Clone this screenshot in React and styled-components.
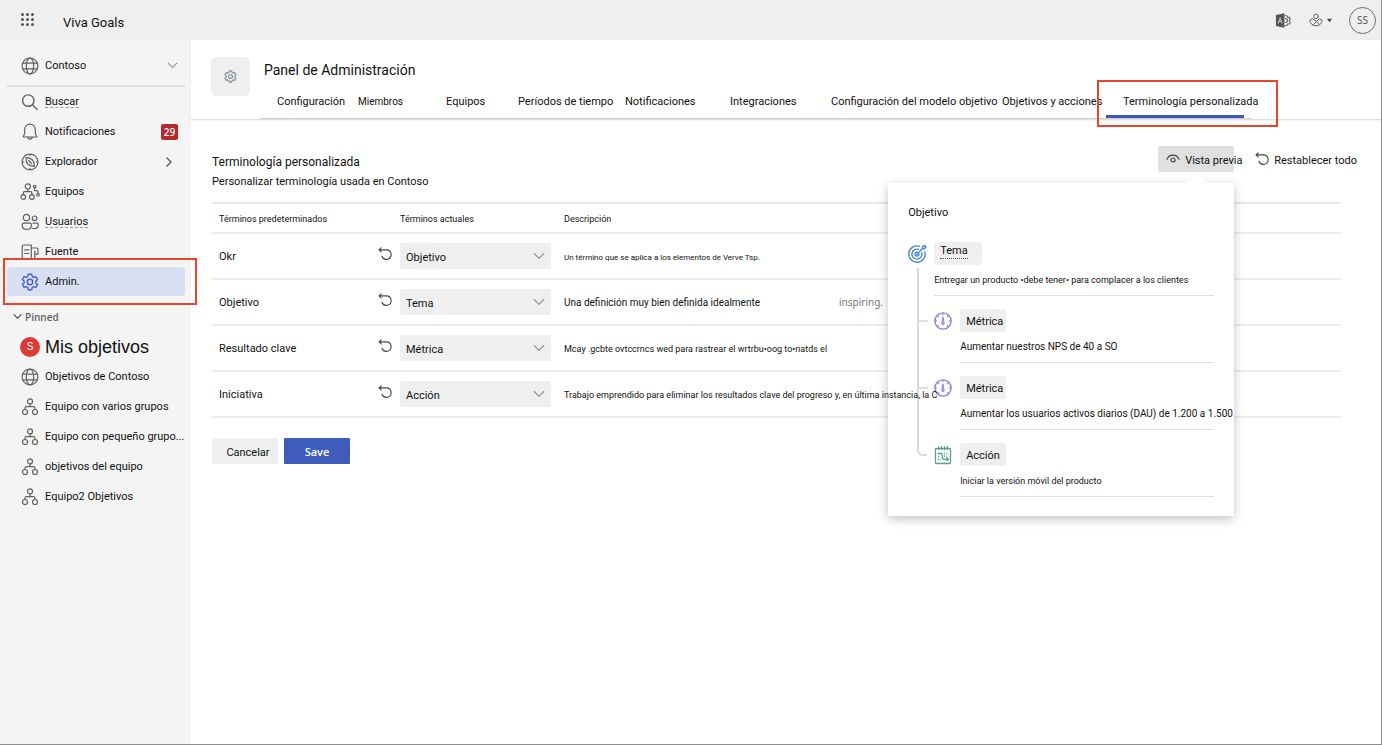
import React from "react";
import styled, { createGlobalStyle, css } from "styled-components";

const Global = createGlobalStyle`
  *, *::before, *::after { box-sizing: border-box; }
  body { margin: 0; background: #fff; }
  body, button, select { font-family: Roboto, "Liberation Sans", sans-serif; color: #111; }
  a { color: inherit; text-decoration: none; }
  ul { list-style: none; margin: 0; padding: 0; }
  h1, h2, h3, p { margin: 0; font-weight: 400; }
  svg { display: block; flex: none; }
`;

/* ---------- icons ---------- */
const Icon = styled.svg.attrs((p) => ({
  viewBox: p.viewBox || "0 0 18 18",
  "aria-hidden": true,
}))`
  width: ${(p) => p.$size || 18}px;
  height: ${(p) => p.$size || 18}px;
  fill: none;
  stroke: ${(p) => p.$color || "#616161"};
  stroke-width: ${(p) => p.$weight || 1.2};
  stroke-linecap: round;
  stroke-linejoin: round;
  overflow: visible;
`;

const GearPaths = () => (
  <>
    <circle cx="9" cy="9" r="2.7" />
    <path d="M7.3 1.2h3.4l.5 2.2 1.5.9 2.2-.7 1.7 2.9-1.7 1.6v1.8l1.7 1.6-1.7 2.9-2.2-.7-1.5.9-.5 2.2H7.3l-.5-2.2-1.5-.9-2.2.7-1.7-2.9 1.7-1.6V8.100L1.400 6.500l1.700-2.900 2.200.7 1.500-.9z" />
  </>
);
const GlobeIcon = () => (
  <Icon>
    <circle cx="9" cy="9" r="7.900" />
    <ellipse cx="9" cy="9" rx="3.700" ry="7.900" />
    <path d="M1.700 6.200h14.600M1.700 11.800h14.600" />
  </Icon>
);
const SearchIcon = () => (
  <Icon $weight={1.4}>
    <circle cx="7.300" cy="7.600" r="5.700" />
    <path d="M11.500 11.800l4.700 4.700" />
  </Icon>
);
const BellIcon = () => (
  <Icon>
    <path d="M9 1.100a5.300 5.300 0 0 0-5.300 5.300v4.200l-1.600 3.400h13.800l-1.600-3.400V6.400A5.300 5.300 0 0 0 9 1.100z" />
    <path d="M6.900 14.100a2.100 2.100 0 0 0 4.200 0" />
  </Icon>
);
const CompassIcon = () => (
  <Icon>
    <circle cx="9" cy="9" r="7.900" />
    <path d="M5 4.600c3 .2 5.300 1 6.700 2.600 1.200 1.500 1.600 3.400 1.500 6.200-3-.1-5-.9-6.500-2.400C5.300 9.500 4.900 7.500 5 4.600zM7.600 7.500l3 3.200M9 1.500v1.200M9 15.300v1.200M1.500 9h1.200M15.300 9h1.200" />
  </Icon>
);
const TeamsIcon = () => (
  <Icon>
    <circle cx="6.800" cy="3.400" r="2.600" />
    <circle cx="2.300" cy="14" r="2.300" />
    <circle cx="10.900" cy="14" r="2.300" />
    <circle cx="13.600" cy="3.600" r="1.300" />
    <circle cx="17" cy="11.700" r="1.300" />
    <path d="M6.800 6v2.700M2.300 11.700V10c0-.8.500-1.300 1.300-1.300h6c.8 0 1.300.5 1.300 1.300v1.700M13.600 5v2.600h2.200c.7 0 1.200.5 1.200 1.200v1.600" />
  </Icon>
);
const UsersIcon = () => (
  <Icon>
    <circle cx="5.400" cy="4.600" r="3.200" />
    <circle cx="13.600" cy="5.300" r="2.300" />
    <path d="M2.700 10.200h6.200c.9 0 1.500.6 1.500 1.500v.7c0 2.500-1.800 4-4.600 4s-4.600-1.500-4.600-4v-.7c0-.9.600-1.500 1.500-1.500zM12 10.200h3.800c.9 0 1.500.6 1.500 1.500 0 2.500-1.300 3.900-4 3.900-.7 0-1.300-.1-1.800-.3" />
  </Icon>
);
const FeedIcon = () => (
  <Icon>
    <path d="M2.700 2h7.600v14H2.700c-.9 0-1.500-.6-1.500-1.500v-11C1.200 2.600 1.800 2 2.700 2zM3.700 6.800h4M3.700 10.500h4M10.300 5h5.200c.9 0 1.500.6 1.500 1.500v4.600h-3.200V16h-3.500M13.800 11V8" />
  </Icon>
);
const OrgIcon = () => (
  <Icon>
    <circle cx="9" cy="3.400" r="2.500" />
    <circle cx="4" cy="14" r="2.500" />
    <circle cx="14" cy="14" r="2.500" />
    <path d="M9 5.900v2.800M4 11.500v-1.200c0-1 .6-1.600 1.600-1.600h6.800c1 0 1.600.6 1.600 1.600v1.200" />
  </Icon>
);
const ChevronDown = ({ size = 12, color = "#8f8f8f", weight = 1.1 }) => (
  <Icon viewBox="0 0 12 12" $size={size} $color={color} $weight={weight}>
    <path d="M1.200 3.500L6 8.300l4.800-4.800" />
  </Icon>
);
const ResetIcon = () => (
  <Icon viewBox="0 0 14 14" $size={14} $color="#444" $weight={1.1}>
    <path d="M3.200.9L1 2.900l2.200 2M1.200 2.900h7.300a4.700 4.700 0 1 1-4.500 6.300" />
  </Icon>
);
const EyeIcon = () => (
  <Icon viewBox="0 0 14 14" $size={14} $color="#444" $weight={1.200}>
    <path d="M1 7.300C2.200 4.700 4.300 3.200 7 3.200s4.800 1.500 6 4.100" />
    <circle cx="7" cy="8" r="2" />
  </Icon>
);
const TargetIcon = () => (
  <Icon $color="#4a86d4" $weight={1.400}>
    <path d="M11.600 1.300A8.200 8.200 0 1 0 16.800 6.600M10.500 4.400a5 5 0 1 0 3.200 3.300M9.200 7.100a2 2 0 1 0 1.800 1.900M8.900 9.200l5.400-5.500M14.300 3.700l.2-2.100L16.700.400l.2 1.200 1.100.2-1.500 1.900z" />
  </Icon>
);
const GaugeIcon = () => (
  <Icon $color="#8b7fe0" $weight={1.400}>
    <circle cx="9" cy="9" r="8.100" />
    <path d="M9 5.200l1.200 6.300a1.200 1.200 0 1 1-2.400 0z" fill="#b9b1ee" strokeWidth="0.900" />
    <path d="M9 1v1.700M3.400 3.400l1.200 1.200M14.600 3.400l-1.200 1.200M1 9h1.700M15.300 9H17M3.400 14.600l1.200-1.200M14.600 14.600l-1.200-1.200" strokeWidth="1.100" />
  </Icon>
);
const CalendarIcon = () => (
  <Icon $color="#57a08c" $weight={1.300}>
    <rect x="1.500" y="2.500" width="15" height="15" rx="1" />
    <path d="M4.700.6v3M7.500.6v3M10.500.6v3M13.300.6v3M4 7.500h3.300l1 1.300v3.300l1.200 1.200h4.800M12.800 11.700l1.700 1.600-1.700 1.600" />
    <path d="M10 7.500h4.500M10 10h3M4 10.500h2M4 13.500h3" strokeDasharray="1 1.400" strokeLinecap="butt" />
  </Icon>
);

/* ---------- shell ---------- */
const Shell = styled.div`
  min-height: 100vh;
  display: flex;
  flex-direction: column;
  border: solid #8f8f8f;
  border-width: 0 1px 1px 0;
`;
const TopBar = styled.header`
  height: 40px;
  background: #efefef;
  display: flex;
  align-items: center;
  padding: 0 5px 0 20px;
`;
const PlainButton = styled.button`
  border: 0;
  background: none;
  padding: 0;
  display: flex;
  align-items: center;
  gap: 4px;
`;
const AppsButton = styled(PlainButton)`
  height: 38px;
  align-self: flex-start;
`;
const Brand = styled.span`
  margin: 6px 0 0 28px;
  font-size: 13px;
  line-height: 16px;
`;
const TopActions = styled.div`
  margin-left: auto;
  display: flex;
  align-items: center;
  gap: 17px;
`;
const Avatar = styled.span`
  width: 27px;
  height: 27px;
  border: 1px solid #6d6d6d;
  border-radius: 50%;
  display: grid;
  place-items: center;
  font: 10px "Noto Sans", sans-serif;
  color: #555;
`;
const Body = styled.div`
  flex: 1;
  display: flex;
`;

const Callout = css`
  content: "";
  position: absolute;
  border: 2px solid #e8452c;
  pointer-events: none;
  z-index: 3;
`;

/* ---------- side navigation ---------- */
const Sidebar = styled.nav`
  width: 191px;
  flex: none;
  background: #f4f4f4;
  padding: 6px 6px 0 7px;
`;
const OrgButton = styled(PlainButton)`
  width: 178px;
  height: 41px;
  padding: 0 7px 0 14px;
  gap: 6px;
  font-size: 11px;
  border-bottom: 2px solid #dedede;
  & > svg:last-child { margin-left: auto; }
`;
const NavList = styled.ul`
  display: flex;
  flex-direction: column;
  gap: 1px;
`;
const NavLink = styled.a`
  position: relative;
  width: 178px;
  height: 29px;
  padding: 0 7px 0 14px;
  display: flex;
  align-items: center;
  gap: 6px;
  white-space: nowrap;
  font-size: 11px;
  ${(p) => p.$large && 'font-family: "Liberation Sans", sans-serif; font-size: 18px;'}
  border-radius: 4px;
  ${(p) =>
    p.$active &&
    css`
      background: #d9dff2;
      &::after {
        ${Callout}
        inset: -9px -12px -9px -4px;
      }
    `}
`;
const Label = styled.span`
  line-height: 16px;
  ${(p) => p.$dashed && "line-height: 11px; border-bottom: 1px dashed #999;"}
`;
const MoreMark = styled.span`
  margin: 0 4px 0 auto;
`;
const Badge = styled.span`
  margin-left: auto;
  width: 17px;
  height: 16px;
  border-radius: 2px;
  background: #b7272c;
  color: #fff;
  font: 500 10px/16px "Noto Sans", sans-serif;
  text-align: center;
`;
const PinnedToggle = styled(PlainButton)`
  height: 29px;
  margin-top: 6px;
  margin-bottom: 1px;
  padding-left: 6px;
  gap: 3px;
  font: 600 10px "Open Sans", sans-serif;
  color: #616161;
`;
const Initial = styled.span`
  width: 20px;
  height: 20px;
  margin: 0 -1px;
  border-radius: 50%;
  background: #dd3a35;
  color: #fff;
  font-size: 10px;
  line-height: 20px;
  text-align: center;
`;

/* ---------- main ---------- */
const Main = styled.main`
  flex: 1;
  min-width: 0;
`;
const PageHead = styled.div`
  display: flex;
  gap: 10px;
  padding: 17px 0 0 20px;
  border-bottom: 1px solid #e0e0e0;
  box-shadow: 0 1px 2px rgba(0, 0, 0, 0.06);
`;
const GearTile = styled.div`
  width: 39px;
  height: 39px;
  border-radius: 6px;
  background: #efefef;
  display: grid;
  place-items: center;
`;
const HeadText = styled.div`
  flex: 1;
  min-width: 0;
`;
const Title = styled.h1`
  padding-left: 4px;
  font-size: 14px;
  line-height: 26px;
`;
const Tabs = styled.div`
  display: grid;
  grid-template-columns: 81px 88px 72px 107px 105px 101px 171px 121px 121px;
  width: 992px;
  padding-left: 17px;
  border-bottom: 1px solid #d0d0d0;
`;
const Tab = styled.a`
  height: 35px;
  font-size: ${(p) => (p.$small ? 10 : 11)}px;
  line-height: 37px;
  white-space: nowrap;
`;
const ActiveTab = styled(Tab)`
  position: relative;
  width: 138px;
  margin-left: -17px;
  padding-left: 17px;
  border-bottom: 3px solid #3f57b8;
  &::after {
    ${Callout}
    inset: -3px -34px -12px -9px;
  }
`;
const Content = styled.section`
  padding: 26px 40px 24px 21px;
`;
const Intro = styled.div`
  display: flex;
  justify-content: space-between;
  align-items: flex-start;
  height: 56px;
`;
const Heading = styled.h2`
  margin-top: 6px;
  font-size: 12px;
  line-height: 20px;
`;
const Sub = styled.p`
  font-size: 11px;
  line-height: 20px;
`;
const Tools = styled.div`
  display: flex;
  gap: 21px;
  margin-right: -16px;
`;
const PreviewWrap = styled.div`
  position: relative;
`;
const ToolButton = styled(PlainButton)`
  height: 26px;
  gap: 5px;
  font-size: 11px;
  white-space: nowrap;
  & > span { padding-top: 3px; }
`;
const PreviewButton = styled(ToolButton)`
  width: 76px;
  padding-left: 8px;
  border-radius: 2px;
  background: #e0e0e0;
`;

const Table = styled.table`
  width: 100%;
  table-layout: fixed;
  border-collapse: collapse;
  border-top: 2px solid #e8e8e8;
  th, td {
    padding: 0;
    text-align: left;
    font-weight: 400;
    border-bottom: 2px solid #ececec;
    white-space: nowrap;
  }
  th { height: 30px; padding-top: 2px; font-size: 9px; }
  td { height: 46px; font-size: 11px; }
  th:first-child, td:first-child { padding-left: 7px; }
`;
const RowReset = styled(PlainButton)`
  padding-bottom: 4px;
`;
const SelectBox = styled.div`
  position: relative;
  width: 151px;
  svg { position: absolute; right: 6px; top: 7px; pointer-events: none; }
`;
const Select = styled.select`
  appearance: none;
  width: 100%;
  height: 26px;
  padding: 2px 6px 0;
  border: 0;
  border-radius: 2px;
  background: #efefef;
  font-size: 11px;
  display: block;
`;
const Desc = styled.span`
  position: relative;
  z-index: 2;
  font-size: ${(p) => p.$size || 9}px;
`;
const Faded = styled.span`
  margin-left: 79px;
  font: 10px "Noto Sans", sans-serif;
  color: #777;
`;
const Actions = styled.div`
  display: flex;
  gap: 6px;
  margin-top: 20px;
`;
const Action = styled.button`
  width: 66px;
  height: 26px;
  padding: ${(p) => (p.$primary ? "0" : "3px 0 0 6px")};
  border: 0;
  border-radius: 1px;
  background: ${(p) => (p.$primary ? "#3f5bbb" : "#efefef")};
  color: ${(p) => (p.$primary ? "#fff" : "#111")};
  font: ${(p) => (p.$primary ? '600 11px "Open Sans"' : "11px Roboto")}, sans-serif;
`;

/* ---------- preview popover ---------- */
const Popover = styled.aside`
  position: absolute;
  z-index: 1;
  top: 37px;
  right: 0;
  width: 346px;
  padding: 20px 20px 19px;
  background: #fff;
  box-shadow: 0 3px 10px rgba(0, 0, 0, 0.24);
  &::before {
    content: "";
    position: absolute;
    top: -7px;
    right: 30px;
    width: 14px;
    height: 14px;
    background: #fff;
    transform: rotate(45deg);
  }
`;
const PopTitle = styled.h3`
  margin-bottom: 19px;
  font-size: 11px;
  line-height: 20px;
`;
const Node = styled.div`
  display: grid;
  grid-template-columns: 18px 1fr;
  gap: 8px;
  margin-bottom: 13px;
  & > svg { margin-top: 3px; }
`;
const NodeBody = styled.div`
  min-width: 0;
  padding-bottom: 7px;
  border-bottom: 1px solid #dedede;
`;
const Tag = styled.span`
  display: block;
  width: ${(p) => (p.$root ? 48 : 46)}px;
  height: 23px;
  padding-left: 6px;
  border-radius: 3px;
  background: #efefef;
  font-size: 11px;
  line-height: ${(p) => (p.$root ? 18 : 25)}px;
  & > span { ${(p) => p.$root && "display: inline-block; height: 17px; border-bottom: 1px dotted #555;"} }
`;
const Caption = styled.p`
  margin-top: 7px;
  font-size: ${(p) => (p.$small ? 9 : 10)}px;
  line-height: 16px;
  white-space: nowrap;
`;
const Children = styled.ul`
  position: relative;
  padding-left: 26px;
  &::before {
    content: "";
    position: absolute;
    left: 9px;
    top: -41px;
    bottom: 41px;
    width: 10px;
    border: solid #d9d9d9;
    border-width: 0 0 2px 2px;
    border-bottom-left-radius: 6px;
  }
  li { position: relative; }
  li:not(:last-child)::before {
    content: "";
    position: absolute;
    left: -16px;
    top: 11px;
    width: 10px;
    border-top: 2px solid #dedede;
  }
  li:last-child ${Node} { margin-bottom: 0; }
`;

/* ---------- data ---------- */
const NAV = [
  { label: "Buscar", Glyph: SearchIcon, dashed: true },
  { label: "Notificaciones", Glyph: BellIcon, badge: "29" },
  { label: "Explorador", Glyph: CompassIcon, more: true },
  { label: "Equipos", Glyph: TeamsIcon },
  { label: "Usuarios", Glyph: UsersIcon, dashed: true },
  { label: "Fuente", Glyph: FeedIcon },
];
const PINNED = [
  { label: "Objetivos de Contoso", Glyph: GlobeIcon },
  { label: "Equipo con varios grupos", Glyph: OrgIcon },
  { label: "Equipo con pequeño grupo...", Glyph: OrgIcon },
  { label: "objetivos del equipo", Glyph: OrgIcon },
  { label: "Equipo2 Objetivos", Glyph: OrgIcon },
];
const TABS = [
  { label: "Configuración" },
  { label: "Miembros", small: true },
  { label: "Equipos" },
  { label: "Períodos de tiempo" },
  { label: "Notificaciones" },
  { label: "Integraciones" },
  { label: "Configuración del modelo objetivo" },
  { label: "Objetivos y acciones" },
];
const ROWS = [
  { term: "Okr", value: "Objetivo", desc: "Un término que se aplica a los elementos de Verve Tsp.", size: 8 },
  { term: "Objetivo", value: "Tema", desc: "Una definición muy bien definida idealmente", extra: "inspiring.", size: 10 },
  { term: "Resultado clave", value: "Métrica", desc: "Mcay .gcbte ovtccrncs wed para rastrear el wrtrbu•oog to•natds el" },
  { term: "Iniciativa", value: "Acción", desc: "Trabajo emprendido para eliminar los resultados clave del progreso y, en última instancia, la C" },
];
const NODES = [
  { tag: "Métrica", text: "Aumentar nuestros NPS de 40 a SO", Glyph: GaugeIcon },
  { tag: "Métrica", text: "Aumentar los usuarios activos diarios (DAU) de 1.200 a 1.500", Glyph: GaugeIcon },
  { tag: "Acción", text: "Iniciar la versión móvil del producto", Glyph: CalendarIcon, small: true },
];

function SideNav() {
  return (
    <Sidebar aria-label="Viva Goals">
      <OrgButton>
        <GlobeIcon />
        <Label>Contoso</Label>
        <ChevronDown size={11} />
      </OrgButton>
      <NavList>
        {NAV.map(({ label, Glyph, badge, more, dashed }) => (
          <li key={label}>
            <NavLink href="#">
              <Glyph />
              <Label $dashed={dashed}>{label}</Label>
              {badge && <Badge>{badge}</Badge>}
              {more && (
                <MoreMark>
                  <Icon viewBox="0 0 10 10" $size={10} $weight={1.5}>
                    <path d="M3 1l4 4-4 4" />
                  </Icon>
                </MoreMark>
              )}
            </NavLink>
          </li>
        ))}
        <li>
          <NavLink href="#" $active aria-current="page">
            <Icon $color="#4661c4" $weight={1.4}>
              <GearPaths />
            </Icon>
            <Label>Admin.</Label>
          </NavLink>
        </li>
      </NavList>
      <PinnedToggle>
        <ChevronDown size={9} color="#555" weight={1.6} />
        Pinned
      </PinnedToggle>
      <NavList>
        <li>
          <NavLink href="#" $large>
            <Initial>S</Initial>
            <Label>Mis objetivos</Label>
          </NavLink>
        </li>
        {PINNED.map(({ label, Glyph }) => (
          <li key={label}>
            <NavLink href="#">
              <Glyph />
              <Label>{label}</Label>
            </NavLink>
          </li>
        ))}
      </NavList>
    </Sidebar>
  );
}

function Preview() {
  return (
    <Popover>
      <PopTitle>Objetivo</PopTitle>
      <Node>
        <TargetIcon />
        <NodeBody>
          <Tag $root>
            <span>Tema</span>
          </Tag>
          <Caption $small>Entregar un producto •debe tener• para complacer a los clientes</Caption>
        </NodeBody>
      </Node>
      <Children>
        {NODES.map(({ tag, text, Glyph, small }) => (
          <li key={text}>
            <Node>
              <Glyph />
              <NodeBody>
                <Tag>{tag}</Tag>
                <Caption $small={small}>{text}</Caption>
              </NodeBody>
            </Node>
          </li>
        ))}
      </Children>
    </Popover>
  );
}

export default function App() {
  return (
    <>
      <Global />
      <Shell>
        <TopBar>
          <AppsButton aria-label="Aplicaciones">
            <Icon viewBox="0 0 15 15" $size={15}>
              {[2.5, 7.5, 12.5].map((y) =>
                [2.5, 7.5, 12.5].map((x) => (
                  <circle key={`${x}-${y}`} cx={x} cy={y} r="1.500" fill="#555" stroke="none" />
                ))
              )}
            </Icon>
          </AppsButton>
          <Brand>Viva Goals</Brand>
          <TopActions>
            <PlainButton aria-label="Idioma">
              <Icon $size={17}>
                <path d="M1 3.200L10 1.300v15.400L1 14.800z" fill="#555" stroke="none" />
                <path d="M3.500 12l2-6 2 6M4.200 10h2.600" stroke="#ccc" strokeWidth="1" />
                <path d="M11 3.800l1.800.4.6 1.500 1.900-.2 1 1.700-1 1.300v1.300l1 1.300-1 1.700-1.900-.2-.6 1.500-1.800.4M11.200 7a2.100 2.100 0 0 1 0 4.200" strokeWidth="1.100" />
              </Icon>
            </PlainButton>
            <PlainButton aria-label="Ayuda">
              <Icon $size={14} viewBox="0 0 14 14" $weight={1}>
                <circle cx="7" cy="3.300" r="2.300" />
                <path d="M7 8L3.600 5.800.8 7.200c.4 3.500 2.700 5.600 6.200 5.600s5.800-2.100 6.200-5.600l-2.800-1.400L4.200 11.800M7 8l3.600 3.500" />
              </Icon>
              <Icon $size={5} viewBox="0 0 6 6">
                <path d="M0 1h6L3 5z" fill="#444" stroke="none" />
              </Icon>
            </PlainButton>
            <Avatar>SS</Avatar>
          </TopActions>
        </TopBar>
        <Body>
          <SideNav />
          <Main>
            <PageHead>
              <GearTile>
                <Icon $size={13} $color="#868c98" $weight={1.6}>
                  <GearPaths />
                </Icon>
              </GearTile>
              <HeadText>
                <Title>Panel de Administración</Title>
                <Tabs>
                  {TABS.map((t) => (
                    <Tab key={t.label} href="#" $small={t.small}>
                      {t.label}
                    </Tab>
                  ))}
                  <ActiveTab href="#" aria-current="page">
                    Terminología personalizada
                  </ActiveTab>
                </Tabs>
              </HeadText>
            </PageHead>
            <Content>
              <Intro>
                <div>
                  <Heading>Terminología personalizada</Heading>
                  <Sub>Personalizar terminología usada en Contoso</Sub>
                </div>
                <Tools>
                  <PreviewWrap>
                    <PreviewButton>
                      <EyeIcon />
                      <span>Vista previa</span>
                    </PreviewButton>
                    <Preview />
                  </PreviewWrap>
                  <ToolButton>
                    <ResetIcon />
                    <span>Restablecer todo</span>
                  </ToolButton>
                </Tools>
              </Intro>
              <Table>
                <colgroup>
                  <col width="166" />
                  <col width="22" />
                  <col width="164" />
                  <col />
                </colgroup>
                <thead>
                  <tr>
                    <th scope="col">Términos predeterminados</th>
                    <th aria-label="Restablecer" />
                    <th scope="col">Términos actuales</th>
                    <th scope="col">Descripción</th>
                  </tr>
                </thead>
                <tbody>
                  {ROWS.map((r) => (
                    <tr key={r.term}>
                      <td>{r.term}</td>
                      <td>
                        <RowReset aria-label={`Restablecer ${r.term}`}>
                          <ResetIcon />
                        </RowReset>
                      </td>
                      <td>
                        <SelectBox>
                          <Select aria-label={r.term} defaultValue={r.value}>
                            <option>{r.value}</option>
                          </Select>
                          <ChevronDown />
                        </SelectBox>
                      </td>
                      <td>
                        <Desc $size={r.size}>{r.desc}</Desc>
                        {r.extra && <Faded>{r.extra}</Faded>}
                      </td>
                    </tr>
                  ))}
                </tbody>
              </Table>
              <Actions>
                <Action>Cancelar</Action>
                <Action $primary>Save</Action>
              </Actions>
            </Content>
          </Main>
        </Body>
      </Shell>
    </>
  );
}
